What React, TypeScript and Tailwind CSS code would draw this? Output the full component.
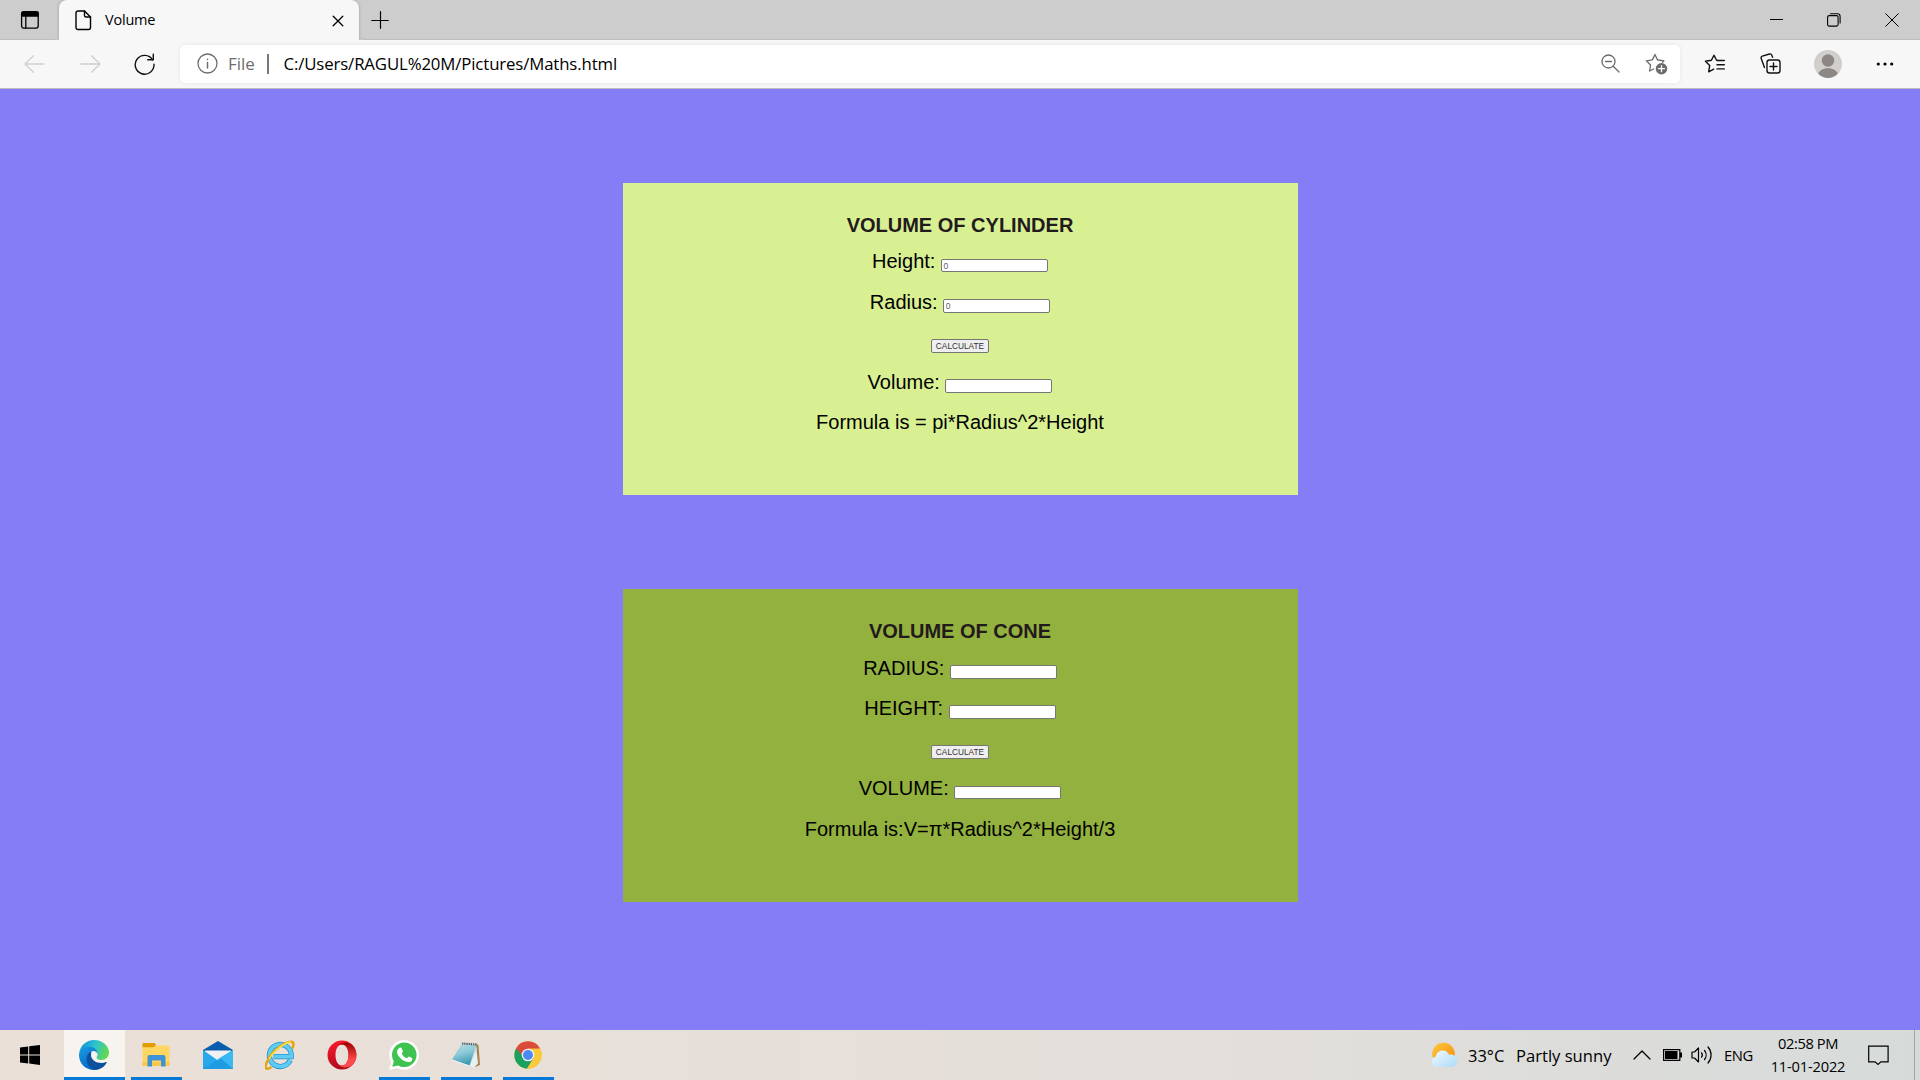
import type { ReactNode } from "react";

type Field = { label: string; hint?: string; row: string; input: string };

function FieldRow({ label, hint, row, input }: Field) {
  return (
    <label className={`flex items-start justify-center ${row}`}>
      <span className="whitespace-pre">{label + " "}</span>
      <input
        placeholder={hint}
        className={`w-[107px] rounded-[2px] border border-[#767676] bg-white pl-[1.5px] text-[8.5px] placeholder:text-[#606060] ${input}`}
      />
    </label>
  );
}

function Card({ title, box, head, fields, result, formula }: {
  title: string; box: string; head: string; fields: Field[]; result: Field; formula: string;
}) {
  return (
    <section className={`w-[675px] pr-px pt-[22px] text-center text-[20px] leading-[40px] text-black ${box}`}>
      <h1 className={`font-bold text-[#231a1d] ${head}`}>{title}</h1>
      {fields.map((f) => <FieldRow key={f.label} {...f} />)}
      <div className="flex h-10 justify-center pt-[17px]">
        <button className="h-[14px] w-[58px] rounded-[2px] border border-[#767676] bg-[#efefef] text-[8.3px] leading-[12px] text-[#333]">CALCULATE</button>
      </div>
      <FieldRow {...result} />
      <p>{formula}</p>
    </section>
  );
}

function Stroke({ w, h, className = "", children, sw = 1.3 }: { w: number; h: number; className?: string; children: ReactNode; sw?: number }) {
  return (
    <svg width={w} height={h} viewBox={`0 0 ${w} ${h}`} fill="none" stroke="currentColor" strokeWidth={sw} strokeLinecap="round" strokeLinejoin="round" className={`shrink-0 ${className}`}>
      {children}
    </svg>
  );
}

function TabStrip() {
  return (
    <div className="flex h-10 bg-[#cdcdcd] text-black">
      <div className="flex w-[59px] shrink-0 items-center rounded-br-[6px] border-b border-[#bdbdbd] pl-[20px]">
        <Stroke w={20} h={20} sw={1.3}>
          <rect x="1.6" y="1.6" width="16.6" height="16.6" rx="2.500" />
          <path d="M2 2.200h16v3.800H2z" fill="currentColor" />
          <path d="M5.800 6v12" />
        </Stroke>
      </div>
      <div className="flex w-[300px] shrink-0 items-center rounded-t-[8px] bg-[#f7f7f7] shadow-[0_0_3px_#9a9a9a]">
        <Stroke w={17} h={21} className="ml-[16px]" sw={1.4}>
          <path d="M3 1h6.500L15.500 7v10.500a2 2 0 0 1-2 2H3a2 2 0 0 1-2-2V3a2 2 0 0 1 2-2z" />
          <path d="M9.500 1v4.500a1.500 1.500 0 0 0 1.500 1.500h4.500" />
        </Stroke>
        <span className="ml-[13px] w-[227px] text-[14.5px] tracking-[-0.2px]">Volume</span>
        <Stroke w={12} h={12} className="mt-px" sw={1.3}><path d="M1.200 1.200l9.600 9.600M10.800 1.200l-9.600 9.600" /></Stroke>
      </div>
      <div className="flex flex-1 items-center rounded-bl-[6px] border-b border-[#bdbdbd]">
        <Stroke w={18} h={18} className="ml-[12px]" sw={1.2}><path d="M9.500 .700v16.600M.700 9.500h16.600" /></Stroke>
        <div className="flex-1" />
        <Stroke w={13} h={13} className="mr-[44px]" sw={1}><path d="M0 6.500h13" /></Stroke>
        <Stroke w={14} h={14} className="mr-[44px]" sw={1.1}>
          <rect x=".6" y="2.600" width="10.500" height="10.500" rx="1.600" />
          <path d="M3.500.700h6.900a2.700 2.700 0 0 1 2.700 2.700v6.500" />
        </Stroke>
        <Stroke w={14} h={14} className="mr-[21px]" sw={1}><path d="M.700.700l12.600 12.600M13.300.700L.700 13.300" /></Stroke>
      </div>
    </div>
  );
}

function AddressBar() {
  return (
    <div className="flex h-[49px] items-center border-b border-[#bcbcbc] bg-[#f7f7f7] pb-px text-[#111]">
      <Stroke w={21} h={18} className="ml-[24px] text-[#cfcfcf]" sw={1.3}><path d="M20 9H1M9.500 .800L1 9l8.500 8.200" /></Stroke>
      <Stroke w={21} h={18} className="ml-[35px] text-[#cfcfcf]" sw={1.3}><path d="M1 9h19M11.500 .800L20 9l-8.500 8.200" /></Stroke>
      <Stroke w={21} h={22} className="ml-[33px]" sw={1.4}>
        <path d="M18.600 6.800A9.400 9.400 0 1 0 20 11.300" /><path d="M19.300 1.200v5.600h-5.600" />
      </Stroke>
      <div className="ml-[25px] flex h-[38px] w-[1500px] shrink-0 items-center rounded-[5px] bg-white shadow-[0_0_4px_#e4e4e4]">
        <Stroke w={21} h={21} className="ml-[17px] text-[#6e6e6e]">
          <circle cx="10.500" cy="10.500" r="9.500" /><path d="M10.500 9.500v5.500M10.500 6.200v.3" strokeWidth="1.500" />
        </Stroke>
        <span className="ml-[10px] w-[39px] text-[17px] text-[#6e6e6e]">File</span>
        <span className="h-[20px] w-[1.5px] bg-[#777]" />
        <span className="ml-[15px] whitespace-nowrap text-[16.8px] tracking-[-0.13px] text-black">C:/Users/RAGUL%20M/Pictures/Maths.html</span>
        <div className="flex-1" />
        <Stroke w={19} h={19} className="text-[#6b6b6b]"><circle cx="7.500" cy="7.500" r="6.500" /><path d="M4.500 7.500h6M12.200 12.200l5.800 5.800" /></Stroke>
        <Stroke w={23} h={22} className="ml-[25px] mr-[12px] text-[#6b6b6b]" sw={1.3}>
          <path d="M13 7l-.5-.1L10 1.500 7.300 6.900l-6 .9 4.300 4.200-1 6 4-2M13 7l6 .9-1.500 1.500" />
          <circle cx="16.500" cy="15.700" r="5.700" fill="currentColor" stroke="none" />
          <path d="M16.500 12.700v6M13.500 15.700h6" stroke="white" />
        </Stroke>
      </div>
      <Stroke w={22} h={20} className="ml-[24px]" sw={1.4}>
        <path d="M14 6.500l-1.400-.2L10 1.200 7.400 6.300l-6 .9 4.300 4.200-1 6.400 5-2.600" /><path d="M14 6.500h6.300M13 10.700h7.300M13 14.900h7.300" />
      </Stroke>
      <Stroke w={21} h={21} className="ml-[34px]" sw={1.4}>
        <rect x="7" y="7" width="13" height="13" rx="2.500" /><path d="M13.500 10v7M10 13.500h7" />
        <path d="M4.500 14.500L1.200 5.500A1.800 1.800 0 0 1 2.300 3.200L9.500 1a1.800 1.800 0 0 1 2.200 1l.9 2.200" />
      </Stroke>
      <svg width="28" height="28" viewBox="0 0 28 28" className="ml-[33px] shrink-0">
        <circle cx="14" cy="14" r="14" fill="#d1cfcc" /><circle cx="14" cy="10.500" r="6.200" fill="#8c8784" />
        <path d="M4.200 23.500C6 20 10 18.200 14 18.200s8 1.800 9.800 5.300A14 14 0 0 1 14 28a14 14 0 0 1-9.800-4.500z" fill="#8c8784" />
      </svg>
      <svg width="18" height="4" viewBox="0 0 18 4" className="ml-[34px] shrink-0"><circle cx="2.300" cy="2" r="1.600" /><circle cx="9" cy="2" r="1.600" /><circle cx="15.700" cy="2" r="1.600" /></svg>
    </div>
  );
}

function EdgeIcon() {
  return (
    <svg width="30" height="30" viewBox="0 0 30 30">
      <defs>
        <linearGradient id="eg" x1="0" y1="0.2" x2="1" y2="0.5"><stop offset="0" stopColor="#0f8fd6" /><stop offset=".5" stopColor="#2bc3d2" /><stop offset="1" stopColor="#66d84e" /></linearGradient>
        <linearGradient id="eb" x1="0" y1="0" x2=".5" y2="1"><stop offset="0" stopColor="#1b9de2" /><stop offset="1" stopColor="#0669c4" /></linearGradient>
      </defs>
      <path d="M.300 13C1.300 5.500 7.500 0 15 0c8.500 0 15 6 15 12.500 0 4.500-3.300 7.500-7.500 7.500-3.500 0-5-1.500-5-2.500 0-.8 1-1.300 1-3 0-3-3-5.500-6.500-5.500C7 9 2.500 9.500.300 13z" fill="url(#eg)" />
      <path d="M0 15c0-5 5-8.500 10-8.500 5.500 0 8.500 4 8.500 7.500 0-1.500-2-3-4-3-3 0-4.500 3-4.500 6 0 6 4 11.500 9 12.500-1.300.4-2.700.5-4 .5C6.500 30 0 23.500 0 15z" fill="url(#eb)" />
      <path d="M12.500 11.500c-3 1-5 4-5 7.500C7.500 25 12 30 17 29.800c5-.5 8.700-3.300 10.700-7 .3-.7-.2-1-.8-.7-1.200.6-2.600.9-4.200.9-6 0-10.700-3.500-10.700-8 0-1.300.2-2.500.5-3.500z" fill="#0b519e" />
    </svg>
  );
}

function FolderIcon() {
  return (
    <svg width="28" height="24" viewBox="0 0 28 24">
      <path d="M1.500 0h11l1.500 2-1.500 3H.500V1a1 1 0 0 1 1-1z" fill="#e09b05" />
      <path d="M.500 4.200h11L14 2.500h12.500a1 1 0 0 1 1 1V22a1 1 0 0 1-1 1h-25a1 1 0 0 1-1-1z" fill="#ffd661" />
      <path d="M.500 19h27v3a1 1 0 0 1-1 1h-25a1 1 0 0 1-1-1z" fill="#fbc848" />
      <path d="M5.500 23.500V14a2 2 0 0 1 2-2h14a2 2 0 0 1 2 2v9.500H19V17.500h-9v6z" fill="#3e93d6" />
    </svg>
  );
}

function MailIcon() {
  return (
    <svg width="30" height="28" viewBox="0 0 30 28">
      <path d="M0 9L15 0l15 9v5H0z" fill="#0a5cad" /><path d="M2 9.500h26V19H2z" fill="#f1f1f3" />
      <path d="M0 9l15 10.500L30 9v19H0z" fill="#28a7ea" /><path d="M0 28L30 9v19z" fill="#1f9be3" /><path d="M15 18L30 28V9z" fill="#3ab8f3" />
      <path d="M0 28L15 19.500 18 17.500 30 28z" fill="#1f9be3" />
    </svg>
  );
}

function ExplorerIcon() {
  return (
    <svg width="30" height="30" viewBox="0 0 30 30" fill="none">
      <path d="M25.300 20.200A11 11 0 1 1 26.300 16.600H8.500" stroke="#2793ce" strokeWidth="5.200" />
      <path d="M25.300 20.200A11 11 0 1 1 26.300 16.600H8.500" stroke="#5ecdf4" strokeWidth="3.600" />
      <path d="M4.500 18C.500 23.500-.500 27.500 1.500 28.500c1 .5 3-.2 5-1.500M3.500 18C9 9.500 20 2 26 1.800c3.500 0 3 3.500 1 6.700" stroke="#e3a613" strokeWidth="2.600" />
      <path d="M4 19C9 10 20 2.500 26 2" stroke="#ffe04a" strokeWidth="1.500" />
    </svg>
  );
}

function OperaIcon() {
  return (
    <svg width="30" height="30" viewBox="0 0 30 30">
      <defs><linearGradient id="op" x1="0" y1="0" x2="0.300" y2="1"><stop offset="0" stopColor="#ff1b2d" /><stop offset="1" stopColor="#b0081a" /></linearGradient>
        <linearGradient id="oq" x1="0" y1="0" x2="0" y2="1"><stop offset="0" stopColor="#9c0000" /><stop offset=".7" stopColor="#ff4b4b" /></linearGradient></defs>
      <path fillRule="evenodd" d="M15 .500a14.500 14.500 0 1 1 0 29 14.500 14.500 0 0 1 0-29zM15 4.500c-4 0-6.500 4.500-6.500 10.500S11 25.500 15 25.500 21.500 21 21.500 15 19 4.500 15 4.500z" fill="url(#op)" />
      <path d="M10.500 6.500C14 2 19 1.500 24.500 4.200a14.500 14.500 0 0 1 0 21.600C19 28.500 14 28 10.500 23.500c1.500 1.600 3 2 4.500 2 4 0 6.500-4.500 6.500-10.500S19 4.500 15 4.500c-1.500 0-3 .4-4.500 2z" fill="url(#oq)" />
    </svg>
  );
}

function WhatsAppIcon() {
  return (
    <svg width="30" height="30" viewBox="0 0 30 30">
      <path d="M0 30l2.200-7.800A14.800 14.800 0 1 1 8 27.900z" fill="white" />
      <path d="M3.300 26.800l1.500-5.500A12.300 12.300 0 1 1 9 25.400z" fill="#3ec250" />
      <path d="M10.600 7.800c.5-.5 1.500-.5 1.900.2l1.400 3.200c.2.800-.9 1.700-1.300 2.300 1.200 2.300 2.800 3.800 5.200 4.800.7-.5 1.500-2 2.200-1.900l3 1.500c.7.400.3 2.400-.7 3.300-1.400 1.200-3.500 1.200-6.300.1-3.800-1.600-7.200-5.300-7.900-8.200-.5-2.300.6-4.300 2.500-5.300z" fill="white" />
    </svg>
  );
}

function NotepadIcon() {
  return (
    <svg width="30" height="28" viewBox="0 0 30 28">
      <defs><linearGradient id="np" x1="0" y1="0" x2=".3" y2="1"><stop offset="0" stopColor="#b8dde4" /><stop offset=".5" stopColor="#8fcbd8" /><stop offset="1" stopColor="#3f9bb2" /></linearGradient></defs>
      <path d="M25 3l2.500 1L29 24l-5 2z" fill="#a8834b" /><path d="M25 4L17 24.500l6 2 4-4z" fill="#e9f0f3" />
      <path d="M23.500 3L16.500 22l2 3L26 8z" fill="#cbdbe2" />
      <path d="M11 2.500L25.500 3.500 18.500 24.500 1 18.500z" fill="url(#np)" />
      <path d="M1 18.500l17.500 6-.3 1L1 19.700z" fill="#e8f1f4" />
      <path d="M11 2.500l15 1" stroke="#565e61" strokeWidth="2.200" strokeDasharray="1.300 .9" />
    </svg>
  );
}

function ChromeIcon() {
  return (
    <svg width="28" height="28" viewBox="0 0 28 28">
      <circle cx="14" cy="14" r="13.700" fill="#fdc93c" />
      <path d="M14 14L2.100 7.200A13.700 13.700 0 0 0 13 27.670L20 17.500z" fill="#1ba15f" />
      <path d="M14 14H8L2.100 7.200a13.700 13.700 0 0 1 23.800 0V7.800H14z" fill="#db4b3c" />
      <path d="M14 7.800h12.200a13.700 13.700 0 0 1-13.200 19.870L19.400 17z" fill="#fdc93c" />
      <circle cx="14" cy="14" r="6.300" fill="#f3f3f3" /><circle cx="14" cy="14" r="5" fill="#4a8af4" />
    </svg>
  );
}

function TaskItem({ children, running, active }: { children: ReactNode; running?: boolean; active?: boolean }) {
  return (
    <div className={`flex h-[50px] shrink-0 flex-col items-center ${active ? "w-[61px] bg-[#f7f3ef]" : "w-[62px]"}`}>
      <div className={`flex h-[47px] items-center pt-[2px] ${active ? "pr-px" : ""}`}>{children}</div>
      {running && <div className={`h-[3px] bg-[#0579d8] ${active ? "w-full" : "w-[51px]"}`} />}
    </div>
  );
}

function Taskbar() {
  return (
    <footer className="flex h-[50px] items-center bg-linear-to-r from-[#ebe0d7] via-[#e4dfdb] via-60% to-[#d6dbda] text-black">
      <svg width="20" height="20" viewBox="0 0 20 20" className="ml-[20px] mr-[24px] shrink-0"><path d="M0 2.600L8.200 1.500v7.900H0zM9.200 1.300L20 0v9.400H9.200zM0 10.500h8.200v8L0 17.400zM9.200 10.500H20V20L9.200 18.600z" /></svg>
      <TaskItem running active><EdgeIcon /></TaskItem>
      <TaskItem running><FolderIcon /></TaskItem>
      <TaskItem><MailIcon /></TaskItem>
      <TaskItem><ExplorerIcon /></TaskItem>
      <TaskItem><OperaIcon /></TaskItem>
      <TaskItem running><WhatsAppIcon /></TaskItem>
      <TaskItem running><NotepadIcon /></TaskItem>
      <TaskItem running><ChromeIcon /></TaskItem>
      <div className="flex-1" />
      <div className="flex w-[490px] shrink-0 items-center">
        <svg width="28" height="26" viewBox="0 0 28 26" className="mr-[10px] shrink-0">
          <defs>
            <linearGradient id="sun" x1="0" y1="0" x2="1" y2="1"><stop offset="0" stopColor="#ffc83d" /><stop offset="1" stopColor="#f58a0b" /></linearGradient>
            <linearGradient id="cl" x1="0" y1="0" x2="1" y2="1"><stop offset="0" stopColor="#f2faff" /><stop offset=".5" stopColor="#cfeafb" /><stop offset="1" stopColor="#a9dcf7" /></linearGradient>
          </defs>
          <circle cx="13.500" cy="12" r="11.300" fill="url(#sun)" />
          <path d="M6.800 25a5.300 5.300 0 0 1-.9-10.400c.4-4 3.300-6.200 6.600-6.200 3.200 0 5.300 1.500 6.400 4.200 5-.6 8.400 2.200 8.400 6.200 0 3.700-2.800 6.200-6.300 6.200z" fill="url(#cl)" />
        </svg>
        <span className="w-[48px] pt-[3px] text-[16.5px]">33°C</span>
        <span className="w-[117px] whitespace-nowrap pt-[3px] text-[16.6px]">Partly sunny</span>
        <Stroke w={18} h={10} sw={1.3}><path d="M1 9l8-8 8 8" /></Stroke>
        <svg width="19" height="12" viewBox="0 0 19 12" className="ml-[12px] shrink-0"><path d="M.6.600h16.200v10.800H.600z" fill="none" stroke="black" strokeWidth="1.200" /><path d="M2 2h12.500v8H2zM17 3.500h2v5h-2z" /></svg>
        <Stroke w={21} h={18} className="ml-[9px]" sw={1.2}>
          <path d="M1 6h2.500l4-4v14l-4-4H1z" /><path d="M10.500 6.800a3.500 3.500 0 0 1 0 4.400M13.500 4.500a7 7 0 0 1 0 9M17 1a12 12 0 0 1 0 16" />
        </Stroke>
        <span className="ml-[12px] w-[44px] pt-px text-[14.8px] tracking-[-0.4px]">ENG</span>
        <div className="flex w-[80px] flex-col items-center whitespace-nowrap text-[14.7px] leading-[23px] tracking-[-0.2px]">
          <span className="tracking-[-0.4px]">02:58 PM</span><span>11-01-2022</span>
        </div>
        <svg width="21" height="21" viewBox="0 0 21 21" className="ml-[20px] mr-[25px] shrink-0" fill="none" stroke="black" strokeWidth="1.200"><path d="M.700 1.200h19.400v15.600h-7.200l-2.900 2.700-2.900-2.700H.700z" /></svg>
        <div className="h-[50px] w-px bg-[#a5a8a7]" />
      </div>
    </footer>
  );
}

const R14 = "mt-[17px] h-[14px]";
const R13 = "mt-[18px] h-[13px]";

export default function App() {
  return (
    <div className="flex h-[1080px] w-[1920px] flex-col overflow-hidden font-['Open_Sans',sans-serif]">
      <TabStrip />
      <AddressBar />
      <main className="flex flex-1 flex-col bg-[#857df6] pl-[623px] pt-[94px] font-['Liberation_Sans',sans-serif]">
        <Card
          title="VOLUME OF CYLINDER" box="h-[312px] bg-[#d8f092]" head="h-[36px]"
          fields={[
            { label: "Height:", hint: "0", row: "h-[41px]", input: R13 },
            { label: "Radius:", hint: "0", row: "h-[40px]", input: R14 },
          ]}
          result={{ label: "Volume:", row: "h-[40px]", input: R14 }}
          formula="Formula is = pi*Radius^2*Height"
        />
        <Card
          title="VOLUME OF CONE" box="mt-[94px] h-[313px] bg-[#93b13e]" head="h-[37px]"
          fields={[
            { label: "RADIUS:", row: "h-[40px]", input: R14 },
            { label: "HEIGHT:", row: "h-[40px]", input: R14 },
          ]}
          result={{ label: "VOLUME:", row: "h-[41px]", input: R13 }}
          formula="Formula is:V=π*Radius^2*Height/3"
        />
      </main>
      <Taskbar />
    </div>
  );
}
